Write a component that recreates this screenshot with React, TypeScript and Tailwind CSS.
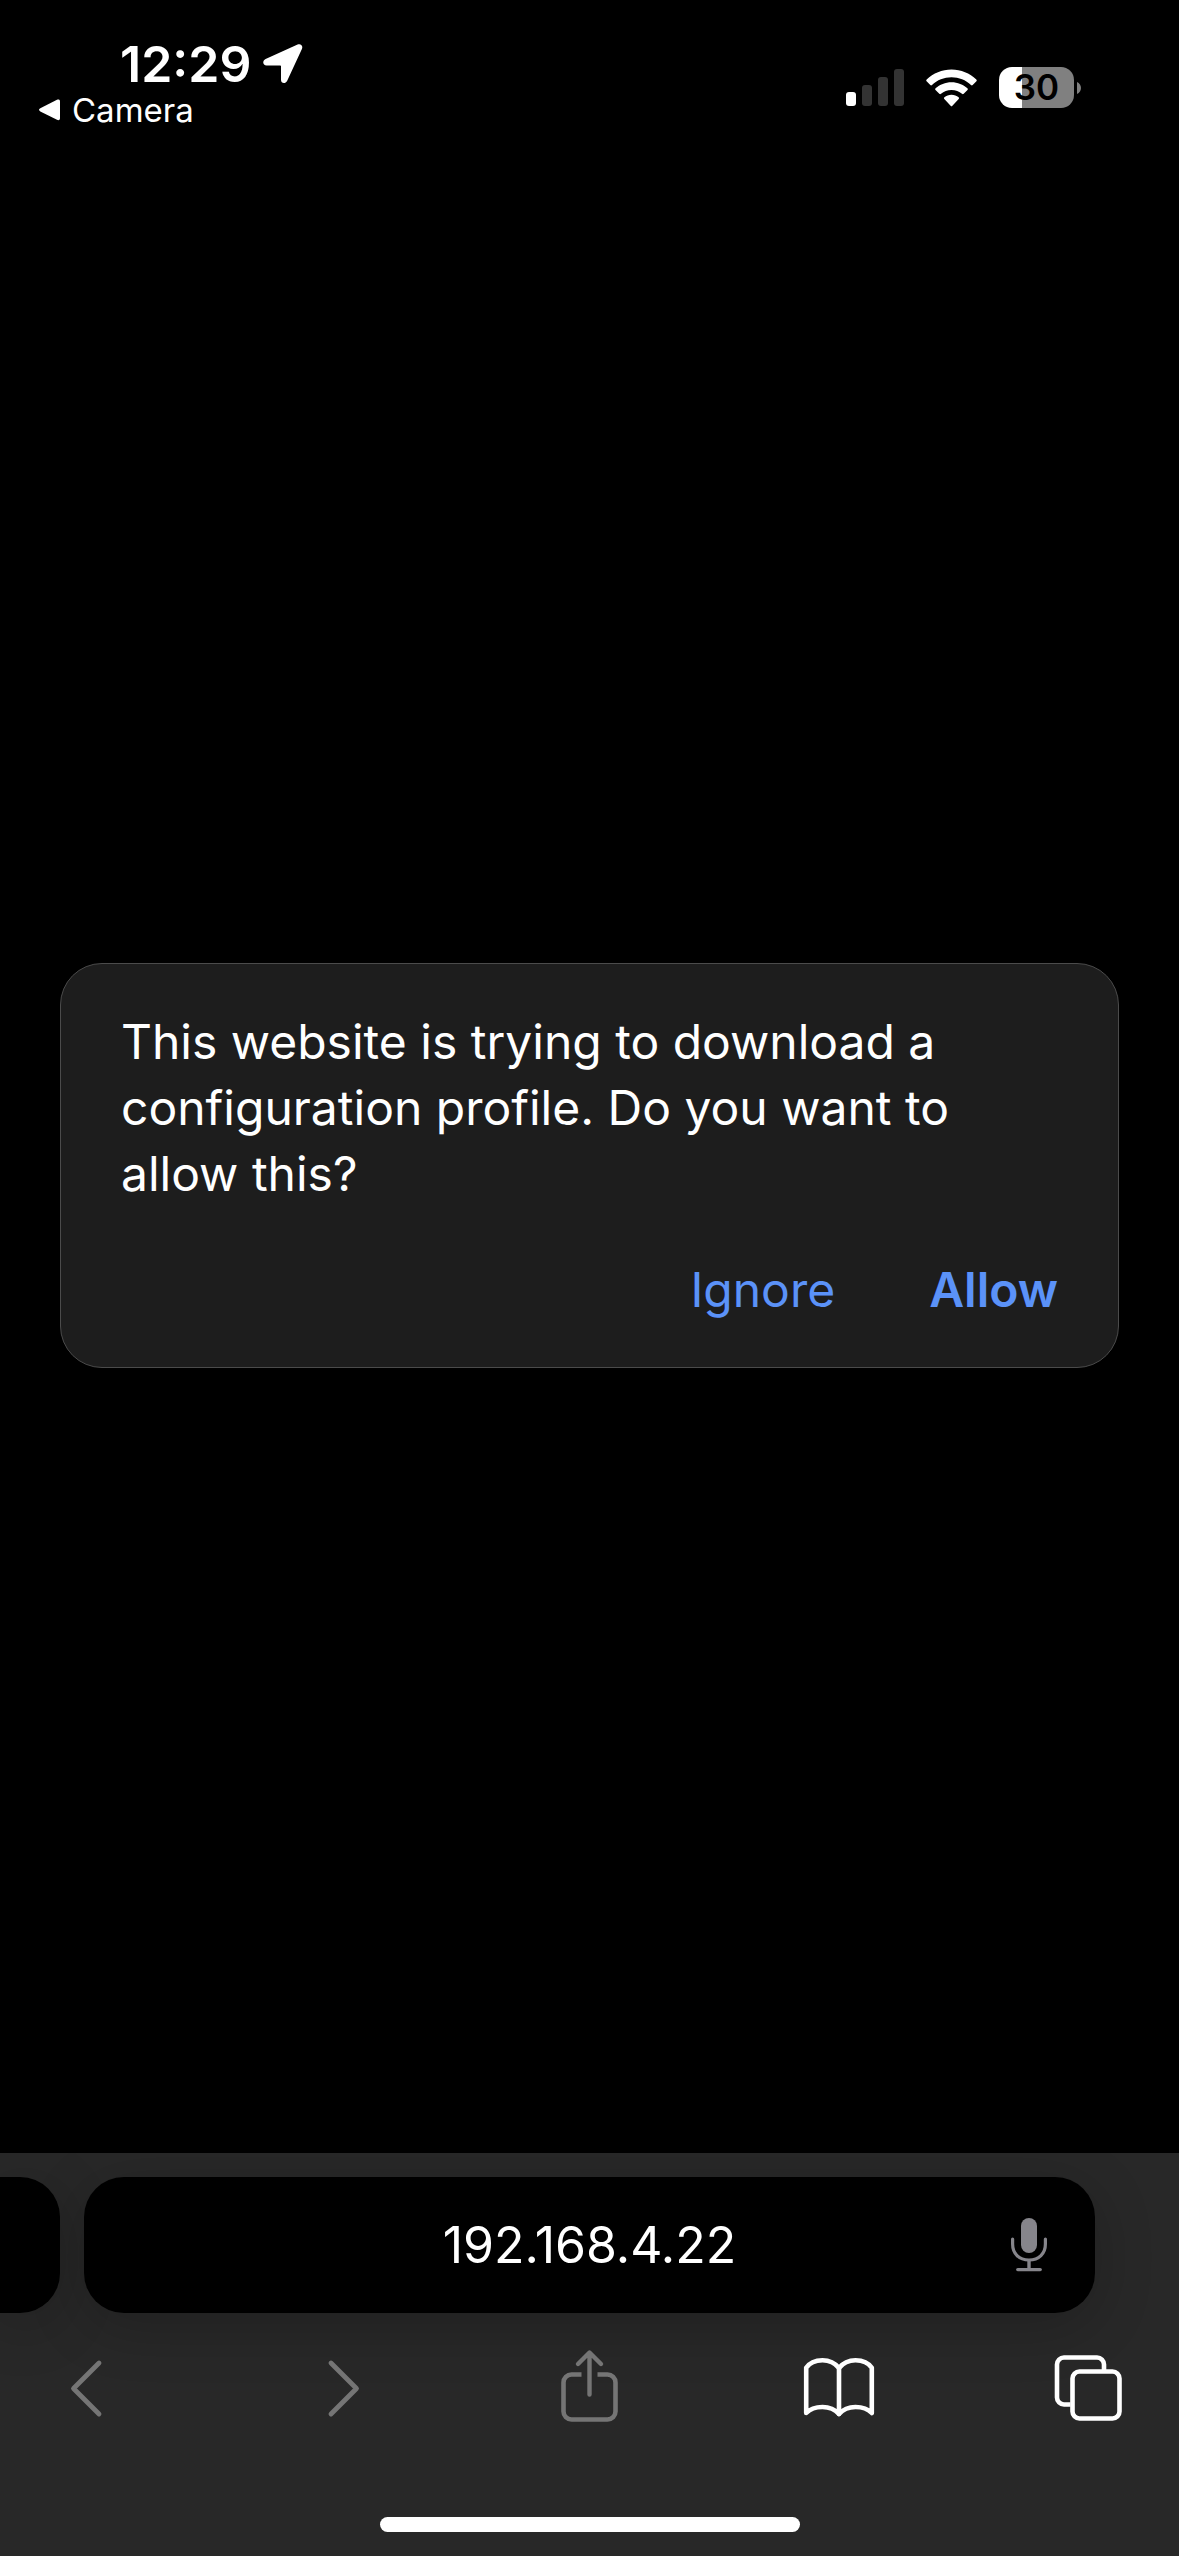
import React from "react";

function LocationArrow() {
  return (
    <svg viewBox="0 0 40 40" className="h-10 w-10" fill="currentColor" aria-hidden="true">
      <path d="M34.6.6 2.6 15.1C-1 16.800-.3 21.400 3.600 21.400H17.200C17.800 21.400 18 21.700 18 22.200V35.800C18 39.800 22.500 40.300 24.200 36.700L38.900 5C40.300 1.900 37.700-.8 34.600.6Z" />
    </svg>
  );
}

function BackTriangle() {
  return (
    <svg viewBox="0 0 21 22" className="h-[22px] w-[21px]" fill="currentColor" aria-hidden="true">
      <path d="M1.300 9.200 18 .7C19.600 0 21 .6 21 2.300V19.300C21 21 19.600 21.600 18 20.800L1.300 12.400C-.4 11.500-.4 10.100 1.300 9.200Z" />
    </svg>
  );
}

function Signal() {
  return (
    <svg viewBox="0 0 58 37" className="h-[37px] w-[58px]" role="img" aria-label="Cellular signal, one bar">
      <rect x="0" y="23" width="10" height="14" rx="3" fill="#fff" />
      <rect x="16" y="16" width="10" height="21" rx="3" fill="#333" />
      <rect x="32" y="8" width="10" height="29" rx="3" fill="#333" />
      <rect x="48" y="0" width="10" height="37" rx="3" fill="#333" />
    </svg>
  );
}

function Wifi() {
  return (
    <svg viewBox="0 0 51 38" className="h-[38px] w-[51px]" fill="#fff" role="img" aria-label="Wi-Fi">
      <path d="M25.500.500C35 .5 43.800 4.200 50.300 10.500C50.900 11.100 50.900 11.800 50.400 12.300L46.700 16C46.200 16.500 45.500 16.500 45 16C39.800 11.100 33 8.300 25.500 8.300S11.200 11.100 6 16C5.500 16.500 4.800 16.500 4.300 16L.6 12.300C.1 11.800.1 11.100.7 10.500C7.200 4.200 16 .5 25.500.5Z" />
      <path d="M25.500 13.200C31.700 13.200 37.200 15.500 41.400 19.300C42 19.900 42 20.500 41.500 21L37.700 24.800C37.200 25.300 36.600 25.300 36 24.800C33.200 22.400 29.600 20.900 25.500 20.900S17.800 22.400 15 24.800C14.400 25.300 13.800 25.300 13.300 24.800L9.500 21C9 20.500 9 19.900 9.600 19.300C13.800 15.500 19.300 13.200 25.500 13.200Z" />
      <path d="M25.500 25.800C28.200 25.800 30.700 26.700 32.600 28.200C33.200 28.700 33.200 29.300 32.700 29.900L26.400 36.800C25.800 37.500 25.200 37.500 24.600 36.800L18.300 29.900C17.800 29.300 17.800 28.700 18.400 28.200C20.300 26.700 22.800 25.800 25.500 25.800Z" />
    </svg>
  );
}

function Battery() {
  return (
    <div className="flex items-center gap-[3px]">
      <div className="flex h-[41px] w-[75px] items-center justify-center rounded-[13px] bg-[linear-gradient(to_right,#fff_23px,#808080_23px)] text-[35px] leading-none font-semibold text-black">
        30
      </div>
      <svg viewBox="0 0 4 12" className="h-3 w-1" fill="#808080" aria-hidden="true">
        <path d="M0 0C2.500 1.200 4 3.400 4 6S2.500 10.800 0 12Z" />
      </svg>
    </div>
  );
}

function StatusBar() {
  return (
    <header className="flex h-[178px] items-start justify-between pr-[98px] pl-[39px]">
      <div className="flex flex-col pt-9">
        <div className="flex h-14 items-center gap-3 pl-[81px]">
          <time className="text-[50px] leading-[56px] font-semibold">12:29</time>
          <LocationArrow />
        </div>
        <button type="button" className="flex h-9 items-center gap-3 text-[33px] leading-9">
          <BackTriangle />
          Camera
        </button>
      </div>
      <div className="flex items-center gap-[22px] pt-[67px]">
        <Signal />
        <Wifi />
        <Battery />
      </div>
    </header>
  );
}

function Dialog() {
  return (
    <section
      role="alertdialog"
      aria-labelledby="dialog-message"
      className="mx-[60px] flex-1 rounded-[42px] border border-[#4b4b4b] bg-[#1d1d1d] px-[60px] pt-[45px] pb-11"
    >
      <p id="dialog-message" className="text-[48px] leading-[66px]">
        This website is trying to download a configuration profile. Do you want to allow this?
      </p>
      <div className="mt-[50px] flex justify-end gap-[94px] text-[48px] leading-[66px] text-[#5b92f8]">
        <button type="button">Ignore</button>
        <button type="button" className="font-semibold">
          Allow
        </button>
      </div>
    </section>
  );
}

function Mic() {
  return (
    <svg viewBox="0 0 36 54" className="h-[54px] w-9" fill="none" stroke="#86858b" strokeLinecap="round" aria-hidden="true">
      <rect x="10" y="0" width="16" height="35" rx="8" fill="#86858b" stroke="none" />
      <path d="M1.600 21V26C1.600 35.500 8 42 18 42S34.400 35.500 34.400 26V21" strokeWidth="3.200" />
      <path d="M18 42V51" strokeWidth="3.400" strokeLinecap="butt" />
      <path d="M6.800 51.600H29.200" strokeWidth="3.400" />
    </svg>
  );
}

function AddressRow() {
  return (
    <div className="flex gap-6 pt-6 pr-[84px]">
      <button
        type="button"
        aria-label="Previous tab"
        className="w-[60px] rounded-r-[40px] bg-black shadow-[0_12px_60px_rgba(0,0,0,0.2)]"
      />
      <form className="flex h-[136px] min-w-0 flex-1 items-center rounded-[40px] bg-black pl-[132px] shadow-[0_12px_60px_rgba(0,0,0,0.2)]">
        <input
          type="text"
          aria-label="Address"
          defaultValue="192.168.4.22"
          className="min-w-0 flex-1 bg-transparent text-center text-[50px] leading-[66px] text-white outline-none"
        />
        <button type="button" aria-label="Voice search" className="flex h-full w-[132px] items-center justify-center">
          <Mic />
        </button>
      </form>
    </div>
  );
}

const tools = [
  {
    label: "Back",
    enabled: false,
    icon: <path d="M43 14 17.500 39.500 43 65" strokeWidth="4.800" />,
  },
  {
    label: "Forward",
    enabled: false,
    icon: <path d="M26 14 51.500 39.500 26 65" strokeWidth="4.800" />,
  },
  {
    label: "Share",
    enabled: false,
    icon: (
      <>
        <path d="M27.500 25.500H17.500A8 8 0 0 0 9.500 33.500V62.500A8 8 0 0 0 17.500 70.500H53.500A8 8 0 0 0 61.500 62.500V33.500A8 8 0 0 0 53.500 25.500H43.500" strokeLinecap="butt" />
        <path d="M35.500 45.500V4.500M24 15 35.500 3.500 47 15" strokeWidth="4.400" />
      </>
    ),
  },
  {
    label: "Bookmarks",
    enabled: true,
    icon: (
      <>
        <path d="M36 19V65" />
        <path d="M36 19C32 14 26 11.200 19.500 11.200C12.500 11.200 6.500 13.800 3.200 18.800V64C6.500 60.500 12 58 19.500 58C26 58 32 60.500 36 65C40 60.500 46 58 52.500 58C60 58 65.500 60.500 68.800 64V18.800C65.500 13.800 59.500 11.200 52.500 11.200C46 11.200 40 14 36 19Z" />
      </>
    ),
  },
  {
    label: "Tabs",
    enabled: true,
    icon: (
      <>
        <path d="M18.500 55.500H12A7 7 0 0 1 5 48.500V15.500A7 7 0 0 1 12 8.500H45A7 7 0 0 1 52 15.500V22" strokeLinecap="butt" />
        <rect x="20.500" y="22.500" width="47" height="47" rx="7" />
      </>
    ),
  },
];

function Toolbar() {
  return (
    <nav aria-label="Browser controls" className="flex justify-between pt-9 pr-[55px] pl-14">
      {tools.map((tool) => (
        <button
          key={tool.label}
          type="button"
          aria-label={tool.label}
          disabled={!tool.enabled}
          className="text-white disabled:text-[#757575]"
        >
          <svg
            viewBox="0 0 72 76"
            className="h-[76px] w-[72px]"
            fill="none"
            stroke="currentColor"
            strokeWidth="4.600"
            strokeLinecap="round"
            strokeLinejoin="round"
            aria-hidden="true"
          >
            {tool.icon}
          </svg>
        </button>
      ))}
    </nav>
  );
}

export default function App() {
  return (
    <div className="flex min-h-screen flex-col bg-black font-['Inter',sans-serif] text-white">
      <StatusBar />
      <main className="flex flex-1 items-center">
        <Dialog />
      </main>
      <footer className="overflow-hidden bg-[#282828] pb-6">
        <AddressRow />
        <Toolbar />
        <div className="mx-auto mt-[92px] h-[15px] w-[420px] rounded-full bg-white" />
      </footer>
    </div>
  );
}
